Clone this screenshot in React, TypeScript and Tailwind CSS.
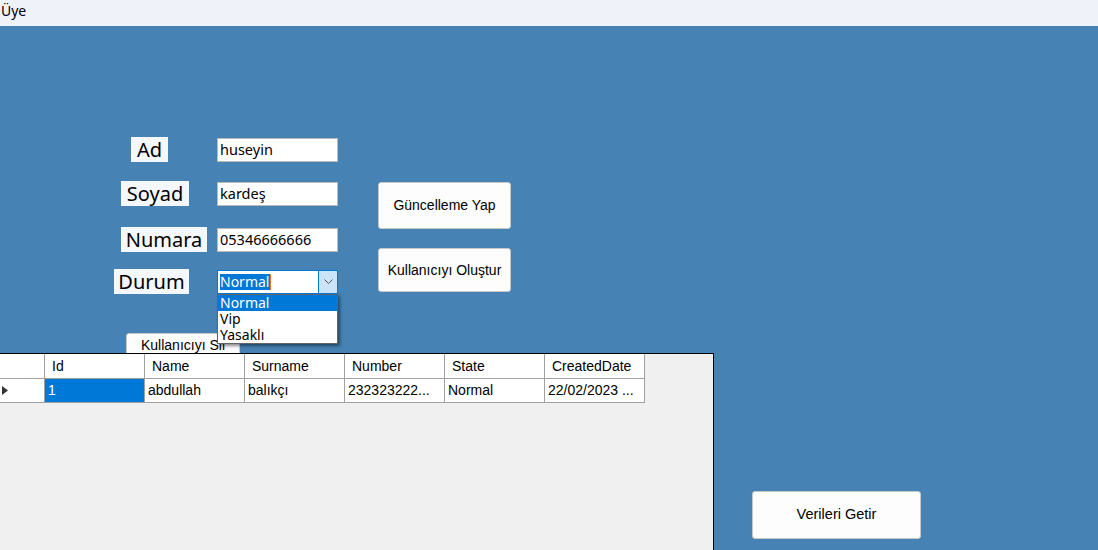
import React from 'react';

const cols = ['Id', 'Name', 'Surname', 'Number', 'State', 'CreatedDate'];
const row = ['1', 'abdullah', 'balıkçı', '232323222...', 'Normal', '22/02/2023 ...'];

function Label({ text, ml, w }: { text: string; ml: string; w: string }) {
  return (
    <div className="w-[217px] shrink-0">
      <div className={`${ml} ${w} h-[25px] bg-[#f4f7fc] flex items-center justify-center text-[20px] text-black leading-none`}>
        {text}
      </div>
    </div>
  );
}

function TextBox({ value }: { value: string }) {
  return (
    <div className="w-[121px] h-[24px] bg-white border border-[#b9b9b9] flex items-center px-[2px] text-[14.5px] text-black">
      {value}
    </div>
  );
}

function Button({ text, className }: { text: string; className: string }) {
  return (
    <button
      type="button"
      className={`${className} shrink-0 bg-[#fdfdfd] border border-[#c8c8c8] rounded-[3px] flex items-center justify-center text-black font-['Liberation_Sans',Arial,sans-serif]`}
    >
      {text}
    </button>
  );
}

export default function App() {
  return (
    <div className="w-[1098px] h-[550px] overflow-hidden font-['Noto_Sans',sans-serif] bg-[#4682b4]">
      {/* Title bar */}
      <div className="h-[26px] bg-[#eff3f9] flex items-start px-[1px] text-[14px] text-black">Üye</div>

      {/* Form */}
      <div className="flex pt-[111px] h-[307px]">
        <div className="w-[338px] shrink-0">
          <div className="flex items-center">
            <Label text="Ad" ml="ml-[131px]" w="w-[37px]" />
            <TextBox value="huseyin" />
          </div>
          <div className="flex items-center mt-[19px]">
            <Label text="Soyad" ml="ml-[121px]" w="w-[68px]" />
            <TextBox value="kardeş" />
          </div>
          <div className="flex items-center mt-[21px]">
            <Label text="Numara" ml="ml-[121px]" w="w-[86px]" />
            <TextBox value="05346666666" />
          </div>
          <div className="flex items-center mt-[17px]">
            <Label text="Durum" ml="ml-[114px]" w="w-[75px]" />
            <div className="relative w-[121px] h-[24px] bg-white border border-[#0078d7] flex text-[14px]">
              <div className="flex-1 flex items-center pl-[2px]">
                <span className="bg-[#0078d7] text-white leading-[16px] pr-[1px] border-r border-[#e07b20]">Normal</span>
              </div>
              <div className="w-[19px] bg-[#cce4f7] border-l border-[#0078d7] flex items-center justify-center">
                <svg width="9" height="5" viewBox="0 0 9 5" fill="none">
                  <path d="M0.5 0.5L4.5 4.5L8.5 0.5" stroke="#555" strokeWidth="1" />
                </svg>
              </div>
              {/* Dropdown list */}
              <div className="absolute left-[-1px] top-[23px] w-[121px] bg-white border border-[#646464] shadow-[2px_2px_3px_rgba(0,0,0,0.45)] z-20 text-[14px] text-black">
                <div className="h-[16px] bg-[#0078d7] text-white leading-[16px] pl-[2px]">Normal</div>
                <div className="h-[16px] leading-[16px] pl-[2px]">Vip</div>
                <div className="h-[16px] leading-[16px] pl-[2px]">Yasaklı</div>
              </div>
            </div>
          </div>
        </div>
        <div className="ml-[40px] pt-[45px] flex flex-col">
          <Button text="Güncelleme Yap" className="w-[133px] h-[47px] text-[14px]" />
          <Button text="Kullanıcıyı Oluştur" className="w-[133px] h-[44px] mt-[19px] text-[14px]" />
        </div>
      </div>

      {/* Delete button (partly under the grid) */}
      <div className="pl-[126px]">
        <button
          type="button"
          className="w-[114px] h-[23px] bg-[#fdfdfd] border border-[#c8c8c8] rounded-[3px] text-[14px] text-black font-['Liberation_Sans',Arial,sans-serif] flex items-center justify-center pt-[1px]"
        >
          Kullanıcıyı Sil
        </button>
      </div>

      {/* Grid + Verileri Getir */}
      <div className="flex -mt-[3px]">
        <div className="relative z-10 w-[714px] h-[197px] bg-[#f0f0f0] border-t border-r border-black font-['Liberation_Sans',Arial,sans-serif] text-[14px] text-black">
          <div className="flex h-[25px]">
            <div className="w-[45px] bg-white border-r border-b border-[#a0a0a0]" />
            {cols.map((c) => (
              <div key={c} className="w-[100px] bg-white border-r border-b border-[#a0a0a0] flex items-center pl-[7px] pt-[1px]">
                {c}
              </div>
            ))}
          </div>
          <div className="flex h-[24px]">
            <div className="w-[45px] bg-white border-r border-b border-[#a0a0a0] flex items-center pl-[2px]">
              <svg width="6" height="9" viewBox="0 0 6 9">
                <path d="M0 0L6 4.5L0 9Z" fill="#333" />
              </svg>
            </div>
            {row.map((v, i) => (
              <div
                key={i}
                className={
                  i === 0
                    ? 'w-[100px] bg-[#0078d7] text-white border-r border-b border-[#a0a0a0] flex items-center pl-[3px]'
                    : 'w-[100px] bg-white border-r border-b border-[#a0a0a0] flex items-center pl-[3px] whitespace-nowrap overflow-hidden'
                }
              >
                {v}
              </div>
            ))}
          </div>
        </div>
        <div className="ml-[38px] pt-[138px]">
          <Button text="Verileri Getir" className="w-[169px] h-[48px] text-[14.5px]" />
        </div>
      </div>
    </div>
  );
}
